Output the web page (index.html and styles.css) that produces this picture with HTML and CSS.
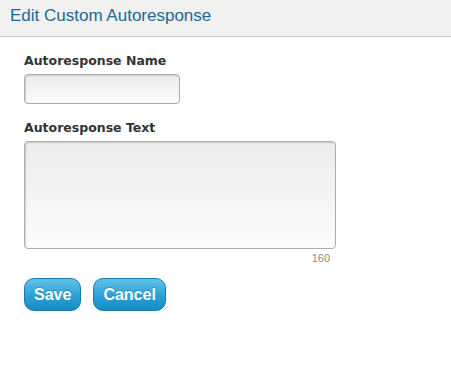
FILE: index.html
```html
<!DOCTYPE html>
<html>
<head>
    <meta charset="utf-8">
    <title>Edit Custom Autoresponse</title>
    <link rel="stylesheet" href="styles.css">
</head>
<body>
    <div class="header">
        <h1>Edit Custom Autoresponse</h1>
    </div>

    <form class="form">
        <div class="field">
            <label for="arName">Autoresponse Name</label>
            <input type="text" id="arName" class="input-name">
        </div>

        <div class="field field-text">
            <label for="arText">Autoresponse Text</label>
            <textarea id="arText" class="input-text"></textarea>
            <div class="counter">160</div>
        </div>

        <div class="actions">
            <button type="button" class="btn">Save</button>
            <button type="button" class="btn">Cancel</button>
        </div>
    </form>
</body>
</html>
```

FILE: styles.css
```css
* {
    margin: 0;
    padding: 0;
    box-sizing: border-box;
}

body {
    font-family: "Liberation Sans", Arial, sans-serif;
    background: #ffffff;
    color: #333333;
}

.header {
    height: 37px;
    background: #f0f1f0;
    border-bottom: 1px solid #c3c7c5;
    padding: 5px 10px 0;
}

.header h1 {
    font-size: 17px;
    font-weight: normal;
    color: #1b6a90;
    line-height: 22px;
}

.form {
    padding: 15px 24px 0;
}

.field {
    width: 312px;
    margin-bottom: 15px;
}

.field-text {
    margin-bottom: 13px;
}

.field label {
    display: block;
    font-family: "DejaVu Sans", Verdana, sans-serif;
    font-size: 12.5px;
    font-weight: bold;
    color: #333333;
    line-height: 18px;
    margin-bottom: 4px;
}

.input-name,
.input-text {
    display: block;
    border: 1px solid #acacac;
    border-radius: 4px;
    background: linear-gradient(#ececec, #fcfcfc);
    box-shadow: inset 1px 1px 2px rgba(0, 0, 0, 0.15);
    font-family: inherit;
    font-size: 13px;
    outline: none;
}

.input-name {
    width: 156px;
    height: 30px;
}

.input-text {
    width: 312px;
    height: 108px;
    resize: none;
}

.counter {
    text-align: right;
    padding: 2px 6px 0 0;
    font-size: 11px;
    color: #888888;
    line-height: 14px;
}

.actions {
    display: flex;
    gap: 12px;
}

.btn {
    height: 33px;
    padding: 0 9px;
    border: 1px solid #1a79a8;
    border-radius: 10px;
    background: linear-gradient(#62c3ea, #2aa0d6 55%, #168cc4);
    color: #ffffff;
    font-family: "Liberation Sans", Arial, sans-serif;
    font-size: 16px;
    font-weight: bold;
    text-shadow: 0 -1px 0 rgba(0, 60, 100, 0.3);
    cursor: pointer;
}
```
